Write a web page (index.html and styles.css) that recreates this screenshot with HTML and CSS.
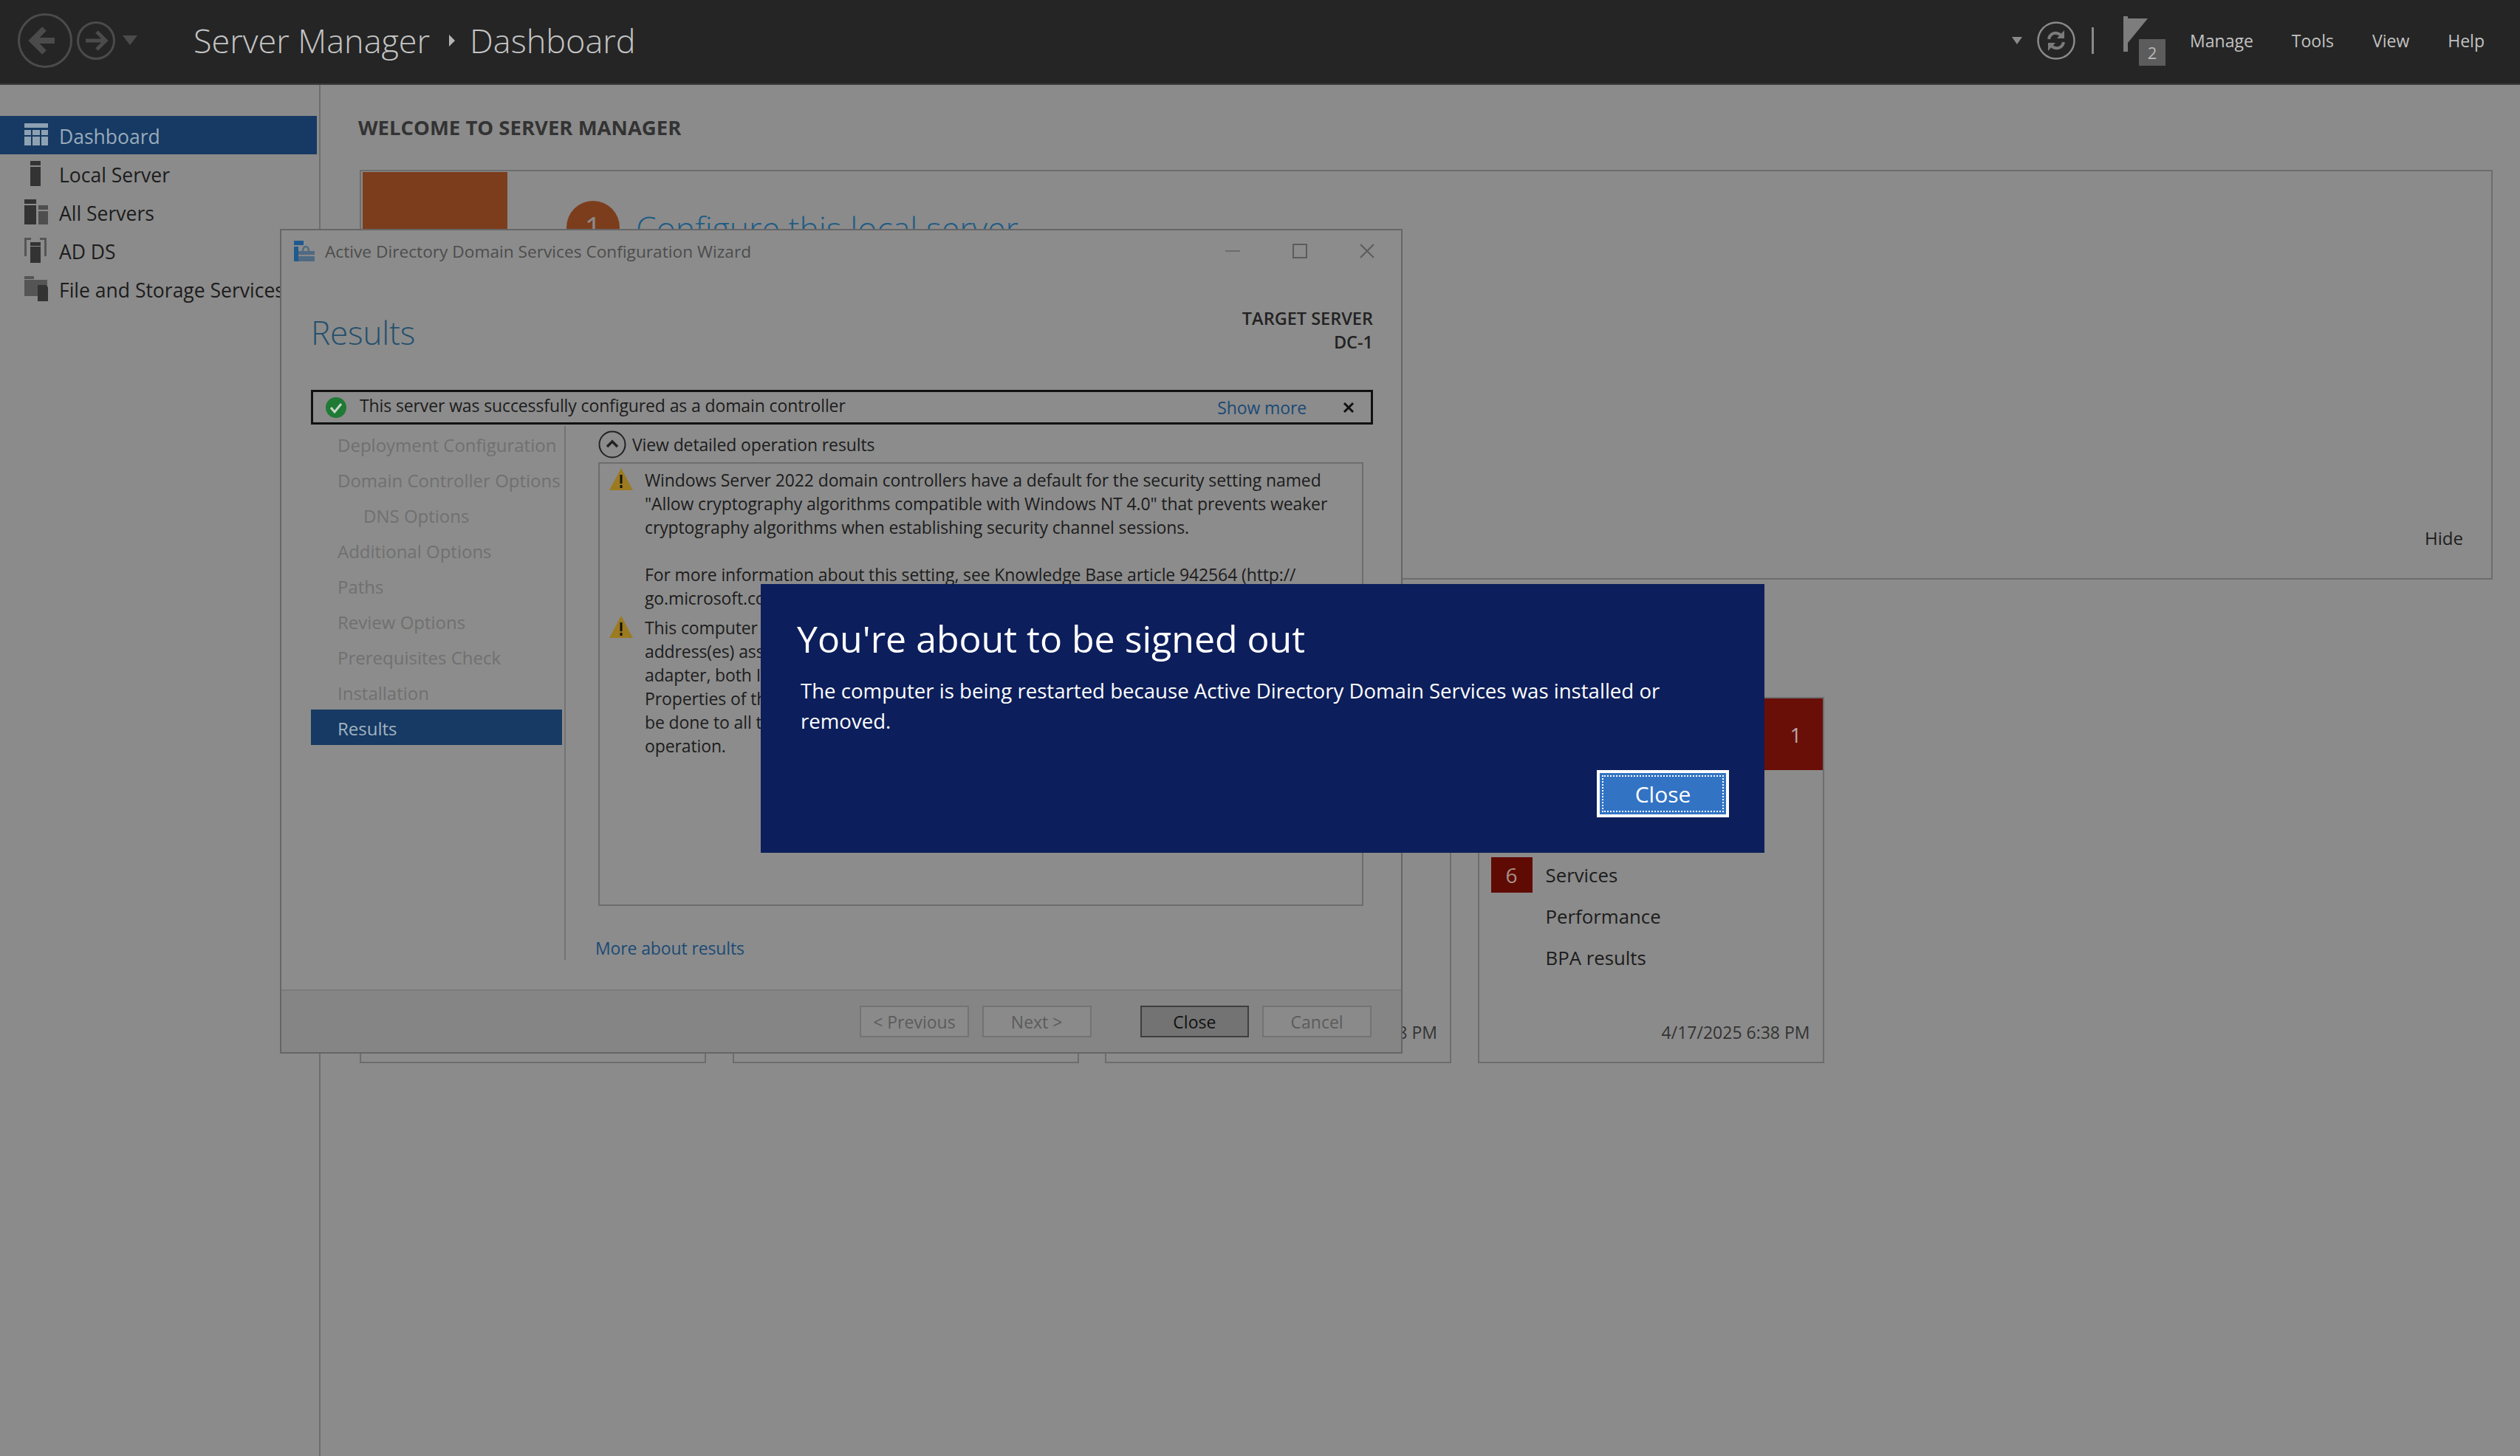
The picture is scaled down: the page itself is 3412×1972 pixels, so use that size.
FILE: index.html
```html
<!DOCTYPE html>
<html lang="en">
<head>
    <meta charset="UTF-8">
    <title>Server Manager</title>
    <link rel="stylesheet" href="styles.css">
</head>
<body>
    <header class="topbar">
        <div class="nav-arrows">
            <svg width="74" height="76" viewBox="0 0 74 76"><circle cx="37" cy="38" r="35.5" fill="none" stroke="#4b4b4b" stroke-width="3"/><path d="M50 38H20M36 22 20 38l16 16" fill="none" stroke="#4b4b4b" stroke-width="8"/></svg>
            <svg width="52" height="54" viewBox="0 0 52 54"><circle cx="26" cy="27" r="24.5" fill="none" stroke="#4b4b4b" stroke-width="3"/><path d="M12 27h26M27 15l12 12-12 12" fill="none" stroke="#4b4b4b" stroke-width="5"/></svg>
            <span class="caret caret-wide"></span>
        </div>
        <div class="crumbs">
            <span>Server Manager</span>
            <span class="crumb-sep"></span>
            <span>Dashboard</span>
        </div>
        <div class="toolbar">
            <span class="caret"></span>
            <svg class="refresh" width="52" height="52" viewBox="0 0 52 52"><circle cx="26" cy="26" r="24.5" fill="none" stroke="#8a8a8a" stroke-width="2.5"/><path d="M16 24c1-6 6-9 11-8 3 .5 5 2 6 4M36 28c-1 6-6 9-11 8-3-.5-5-2-6-4" fill="none" stroke="#7b7b7b" stroke-width="4"/><path d="M37 12v11H27zM15 40V29h10z" fill="#7b7b7b"/></svg>
            <span class="divider"></span>
            <div class="flag">
                <svg width="34" height="50" viewBox="0 0 34 50"><path d="M0 0h6v48H0z" fill="#7d7d7d"/><path d="M6 3h27L6 36z" fill="#7d7d7d"/></svg>
                <span class="flag-count">2</span>
            </div>
            <nav class="menu">
                <span>Manage</span>
                <span>Tools</span>
                <span>View</span>
                <span>Help</span>
            </nav>
        </div>
    </header>

    <div class="shell">
        <aside class="sidebar">
            <div class="side-item active">
                <svg width="34" height="32" viewBox="0 0 34 32"><path d="M1 0h32v6H1zM1 9h9v7H1zM12 9h10v7H12zM24 9h9v7h-9zM1 18h9v12H1zM12 18h10v12H12zM24 18h9v12h-9z" fill="#8ea1b3"/></svg>
                <span class="side-label">Dashboard</span>
            </div>
            <div class="side-item">
                <svg width="34" height="34" viewBox="0 0 34 34"><path d="M9 0h14v6H9zM9 8h14v26H9z" fill="#333"/></svg>
                <span class="side-label">Local Server</span>
            </div>
            <div class="side-item">
                <svg width="34" height="34" viewBox="0 0 34 34"><path d="M1 0h16v6H1zM1 8h16v26H1z" fill="#333"/><path d="M20 8h13v6H20zM20 16h13v18H20z" fill="#4e4e4e"/></svg>
                <span class="side-label">All Servers</span>
            </div>
            <div class="side-item">
                <svg width="34" height="34" viewBox="0 0 34 34"><path d="M1 0h9v3H4v22H1zM22 0h9v25h-3V3h-6z" fill="#555"/><path d="M9 6h14v5H9zM9 12h14v22H9z" fill="#333"/></svg>
                <span class="side-label">AD DS</span>
            </div>
            <div class="side-item">
                <svg width="34" height="34" viewBox="0 0 34 34"><path d="M1 0h13v4H1zM1 5h31v22H1z" fill="#555"/><path d="M19 12h11l3 3v19H19z" fill="#333"/></svg>
                <span class="side-label">File and Storage Services</span>
            </div>
        </aside>

        <main class="main">
            <h2 class="welcome-title">WELCOME TO SERVER MANAGER</h2>
            <section class="welcome-card">
                <div class="quick-start"></div>
                <div class="step">
                    <span class="step-num">1</span>
                    <span class="step-text">Configure this local server</span>
                </div>
                <span class="hide-link">Hide</span>
            </section>
            <section class="tiles">
                <div class="tile"></div>
                <div class="tile"></div>
                <div class="tile"><span class="tile-date">4/17/2025 6:38 PM</span></div>
                <div class="tile">
                    <div class="tile-head">
                        <span class="tile-count">1</span>
                    </div>
                    <div class="tile-row"><span class="tile-badge">6</span>Services</div>
                    <div class="tile-row"><span class="tile-badge empty"></span>Performance</div>
                    <div class="tile-row"><span class="tile-badge empty"></span>BPA results</div>
                    <span class="tile-date">4/17/2025 6:38 PM</span>
                </div>
            </section>
        </main>
    </div>

    <div class="wizard">
        <div class="wiz-title">
            <svg width="28" height="28" viewBox="0 0 28 28"><path d="M0 0h13v6H0zM0 8h6v20H0z" fill="#1f5a8f"/><path d="M6 14h22v14H6z" fill="#4f6a82"/><path d="M12 14c0-8 8-8 8 0" fill="none" stroke="#4f6a82" stroke-width="2.5"/><path d="M6 20h22" stroke="#8a8a8a" stroke-width="2"/></svg>
            <span class="wiz-name">Active Directory Domain Services Configuration Wizard</span>
            <div class="wiz-controls">
                <svg width="20" height="20" viewBox="0 0 20 20"><path d="M0 10h20" stroke="#6c6c6c" stroke-width="2"/></svg>
                <svg width="20" height="20" viewBox="0 0 20 20"><path d="M1 1h18v18H1z" fill="none" stroke="#5c5c5c" stroke-width="2"/></svg>
                <svg width="20" height="20" viewBox="0 0 20 20"><path d="M1 1l18 18M19 1 1 19" stroke="#5c5c5c" stroke-width="2"/></svg>
            </div>
        </div>
        <div class="wiz-head">
            <h1 class="wiz-heading">Results</h1>
            <div class="target">TARGET SERVER<br>DC-1</div>
        </div>
        <div class="banner">
            <svg width="28" height="28" viewBox="0 0 28 28"><circle cx="14" cy="14" r="14" fill="#1f7a35"/><path d="M7 14l5 6 9-11" fill="none" stroke="#c9d6c9" stroke-width="3"/></svg>
            <span class="banner-text">This server was successfully configured as a domain controller</span>
            <span class="banner-link">Show more</span>
            <svg class="banner-x" width="16" height="16" viewBox="0 0 16 16"><path d="M2 2l12 12M14 2 2 14" stroke="#111" stroke-width="3"/></svg>
        </div>
        <div class="wiz-body">
            <div class="steps">
                <div class="step-item">Deployment Configuration</div>
                <div class="step-item">Domain Controller Options</div>
                <div class="step-item sub">DNS Options</div>
                <div class="step-item">Additional Options</div>
                <div class="step-item">Paths</div>
                <div class="step-item">Review Options</div>
                <div class="step-item">Prerequisites Check</div>
                <div class="step-item">Installation</div>
                <div class="step-item current">Results</div>
            </div>
            <div class="results">
                <div class="detail-toggle">
                    <svg width="38" height="38" viewBox="0 0 38 38"><circle cx="19" cy="19" r="17.5" fill="none" stroke="#222" stroke-width="2"/><path d="M12 22l7-7 7 7" fill="none" stroke="#222" stroke-width="3.5"/></svg>
                    View detailed operation results
                </div>
                <div class="detail-box">
                    <div class="warning">
                        <svg class="warn-icon" width="32" height="30" viewBox="0 0 32 30"><path d="M16 0l16 30H0z" fill="#9c7a20"/><path d="M14.5 9h3v12h-3zM14.5 23h3v4h-3z" fill="#111"/></svg>
                        <p>Windows Server 2022 domain controllers have a default for the security setting named<br>"Allow cryptography algorithms compatible with Windows NT 4.0" that prevents weaker<br>cryptography algorithms when establishing security channel sessions.<br><br>For more information about this setting, see Knowledge Base article 942564 (http://<br>go.microsoft.com/fwlink/?LinkId=104751).</p>
                    </div>
                    <div class="warning">
                        <svg class="warn-icon" width="32" height="30" viewBox="0 0 32 30"><path d="M16 0l16 30H0z" fill="#9c7a20"/><path d="M14.5 9h3v12h-3zM14.5 23h3v4h-3z" fill="#111"/></svg>
                        <p>This computer has at least one physical network adapter that does not have static IP<br>address(es) assigned to its IP Properties. If both IPv4 and IPv6 are enabled for a network<br>adapter, both IPv4 and IPv6 static IP addresses should be assigned to both IPv4 and IPv6<br>Properties of the physical network adapter. Such static IP address(es) assignment should<br>be done to all the physical network adapters for reliable Domain Name System (DNS)<br>operation.</p>
                    </div>
                </div>
                <div class="more-link">More about results</div>
            </div>
        </div>
        <div class="wiz-foot">
            <button class="btn" disabled>&lt; Previous</button>
            <button class="btn" disabled>Next &gt;</button>
            <button class="btn primary">Close</button>
            <button class="btn" disabled>Cancel</button>
        </div>
    </div>

    <div class="signout">
        <h1 class="signout-title">You're about to be signed out</h1>
        <p class="signout-text">The computer is being restarted because Active Directory Domain Services was installed or removed.</p>
        <div class="signout-foot">
            <button class="signout-btn"><span>Close</span></button>
        </div>
    </div>
</body>
</html>
```

FILE: styles.css
```css
* {
    box-sizing: border-box;
}
html, body {
    height: 100%;
}
body {
    margin: 0;
    width: 3412px;
    height: 1972px;
    overflow: hidden;
    position: relative;
    display: flex;
    flex-direction: column;
    background-color: #8b8b8b;
    color: #1c1c1c;
    font-family: 'Open Sans', 'Noto Sans', sans-serif;
    font-size: 24px;
}

/* top bar */
.topbar {
    height: 115px;
    flex: none;
    display: flex;
    align-items: center;
    padding-bottom: 4px;
    background-color: #252525;
    border-bottom: 2px solid #3c3c3c;
}
.nav-arrows {
    display: flex;
    align-items: center;
    gap: 6px;
    margin-left: 24px;
    width: 238px;
}
.caret {
    display: block;
    width: 0;
    height: 0;
    border-left: 7px solid transparent;
    border-right: 7px solid transparent;
    border-top: 10px solid #8a8a8a;
}
.caret-wide {
    margin-left: 4px;
    border-left-width: 10px;
    border-right-width: 10px;
    border-top-width: 13px;
    border-top-color: #4b4b4b;
}
.crumbs {
    display: flex;
    align-items: center;
    color: #c4c4c4;
    font-size: 45px;
    font-weight: 300;
}
.crumb-sep {
    margin: 0 20px 0 26px;
    border-top: 8px solid transparent;
    border-bottom: 8px solid transparent;
    border-left: 8px solid #b5b5b5;
}
.toolbar {
    margin-left: auto;
    display: flex;
    align-items: center;
}
.refresh {
    margin-left: 20px;
}
.divider {
    width: 3px;
    height: 36px;
    margin: 0 40px 0 22px;
    background-color: #8a8a8a;
}
.flag {
    position: relative;
    width: 90px;
    height: 67px;
    margin-top: 2px;
}
.flag-count {
    position: absolute;
    left: 21px;
    top: 31px;
    width: 36px;
    height: 36px;
    background-color: #5c5c5c;
    color: #b8b8b8;
    font-size: 22px;
    line-height: 36px;
    text-align: center;
}
.menu {
    display: flex;
    gap: 52px;
    margin-right: 48px;
    color: #c2c2c2;
    font-size: 23px;
}

/* page under the wizard */
.shell {
    flex: 1;
    display: flex;
    min-height: 0;
}
.sidebar {
    width: 434px;
    flex: none;
    padding-top: 42px;
    padding-right: 3px;
    border-right: 2px solid #6d6d6d;
}
.side-item {
    height: 52px;
    display: flex;
    align-items: center;
    gap: 14px;
    padding-left: 32px;
    font-size: 26.5px;
    white-space: nowrap;
}
.side-label {
    margin-top: 3px;
}
.side-item.active {
    background-color: #163a63;
    color: #9aabbb;
}
.main {
    flex: 1;
    padding: 40px 37px 0 53px;
}
.welcome-title {
    margin: 0 0 0 -2px;
    font-size: 27.5px;
    font-weight: 700;
    line-height: 36px;
    color: #333;
}
.welcome-card {
    position: relative;
    margin-top: 39px;
    height: 555px;
    padding: 1px 2px;
    display: flex;
    border: 2px solid #6d6d6d;
}
.quick-start {
    width: 196px;
    background-color: #7c3d1d;
}
.step {
    display: flex;
    align-items: center;
    gap: 22px;
    height: 72px;
    margin: 39px 0 0 80px;
}
.step-num {
    width: 72px;
    height: 72px;
    border-radius: 50%;
    background-color: #7c3d1d;
    color: #8b8b8b;
    font-size: 40px;
    line-height: 72px;
    text-align: center;
}
.step-text {
    color: #1d5c86;
    font-size: 44.6px;
    font-weight: 300;
}
.hide-link {
    position: absolute;
    right: 38px;
    bottom: 38px;
}
.tiles {
    display: flex;
    gap: 35.5px;
    margin-top: 159px;
}
.tile {
    position: relative;
    width: 469px;
    height: 496px;
    border: 2px solid #6d6d6d;
}
.tile-head {
    height: 97px;
    display: flex;
    align-items: center;
    justify-content: flex-end;
    background-color: #6a0e08;
    color: #b8a9a7;
    font-size: 28px;
    padding-right: 28px;
}
.tile-row {
    display: flex;
    align-items: center;
    gap: 18px;
    height: 56px;
    margin-left: 16px;
    font-size: 25.8px;
}
.tile-row:nth-child(2) {
    margin-top: 114px;
}
.tile-badge {
    width: 56px;
    height: 48px;
    background-color: #5f0b03;
    color: #a8908c;
    font-size: 28px;
    line-height: 48px;
    text-align: center;
}
.tile-badge.empty {
    background: none;
}
.tile-date {
    position: absolute;
    right: 17px;
    bottom: 24px;
    font-size: 23px;
    color: #333;
}

/* wizard window */
.wizard {
    position: absolute;
    left: 379px;
    top: 310px;
    width: 1520px;
    height: 1117px;
    display: flex;
    flex-direction: column;
    background-color: #8c8c8c;
    border: 2px solid #666;
    font-size: 23px;
    letter-spacing: -0.12px;
}
.wiz-title {
    height: 56px;
    flex: none;
    display: flex;
    align-items: center;
    gap: 14px;
    padding-left: 17px;
}
.wiz-name {
    color: #4c4c4c;
    font-size: 22.7px;
    letter-spacing: 0;
}
.wiz-controls {
    margin-left: auto;
    display: flex;
    gap: 71px;
    padding-right: 36px;
}
.wiz-head {
    height: 160px;
    flex: none;
    display: flex;
    justify-content: space-between;
    padding: 50px 38px 0 40px;
}
.wiz-heading {
    margin: 0;
    color: #24506c;
    font-size: 44px;
    font-weight: 300;
    line-height: 64px;
}
.target {
    color: #222;
    font-size: 23.5px;
    font-weight: 600;
    letter-spacing: 0;
    line-height: 32px;
    text-align: right;
    margin-top: -3px;
}
.banner {
    height: 47px;
    flex: none;
    display: flex;
    align-items: center;
    margin: 0 38px 0 40px;
    padding: 0 22px 0 17px;
    border: 3px solid #111;
}
.banner-text {
    margin-left: 18px;
    padding-bottom: 5px;
}
.banner-link {
    margin-left: auto;
    margin-right: 49px;
    color: #1b4a75;
}
.wiz-body {
    flex: 1;
    display: flex;
    margin: 2px 0 0 40px;
    min-height: 0;
}
.steps {
    width: 345px;
    height: 723px;
    flex: none;
    padding-top: 2px;
    border-right: 2px solid #737373;
    font-size: 24px;
    letter-spacing: 0;
}
.step-item {
    height: 48px;
    line-height: 48px;
    padding-left: 36px;
    margin-right: 3px;
    color: #707070;
    white-space: nowrap;
}
.step-item.sub {
    padding-left: 71px;
}
.step-item.current {
    margin-top: -2px;
    background-color: #163a63;
    color: #a3b3c2;
    line-height: 51px;
}
.results {
    flex: 1;
    min-width: 0;
    padding: 6px 51px 0 44px;
}
.detail-toggle {
    display: flex;
    align-items: center;
    gap: 8px;
    height: 38px;
}
.detail-box {
    height: 601px;
    margin-top: 5px;
    padding: 6px 0 0 13px;
    border: 2px solid #6d6d6d;
}
.warning {
    display: flex;
    gap: 16px;
    margin-bottom: 8px;
}
.warn-icon {
    flex: none;
}
.warning p {
    margin: 0;
    line-height: 32px;
    white-space: nowrap;
}
.more-link {
    margin-top: 41px;
    margin-left: -4px;
    color: #1b4a75;
}
.wiz-foot {
    height: 85px;
    flex: none;
    display: flex;
    align-items: center;
    background-color: #858585;
    border-top: 2px solid #7b7b7b;
    padding: 0 40px 0 783px;
    gap: 18px;
}
.btn {
    width: 148px;
    height: 43px;
    padding: 0;
    background-color: #8a8a8a;
    border: 2px solid #737373;
    color: #5c5c5c;
    font: inherit;
    font-size: 23px;
}
.btn.primary {
    margin-left: 48px;
    background-color: #737373;
    border-color: #3e3e3e;
    color: #111;
}

/* sign out notice */
.signout {
    position: absolute;
    left: 1030px;
    top: 791px;
    width: 1359px;
    height: 364px;
    display: flex;
    flex-direction: column;
    padding: 39px 48px 48px 49px;
    background-color: #0c1e5b;
    color: #fff;
}
.signout-title {
    margin: 0;
    font-size: 50px;
    font-weight: 400;
    line-height: 70px;
}
.signout-text {
    margin: 15px 0 0 5px;
    width: 1190px;
    font-size: 27.6px;
    line-height: 41px;
}
.signout-foot {
    margin-top: auto;
    display: flex;
    justify-content: flex-end;
}
.signout-btn {
    width: 179px;
    height: 64px;
    padding: 3px;
    background-color: #3273c4;
    border: 4px solid #fff;
    color: #fff;
    font: inherit;
    font-size: 30px;
}
.signout-btn span {
    display: flex;
    align-items: center;
    justify-content: center;
    height: 100%;
    border: 2px dotted #fff;
}
```
